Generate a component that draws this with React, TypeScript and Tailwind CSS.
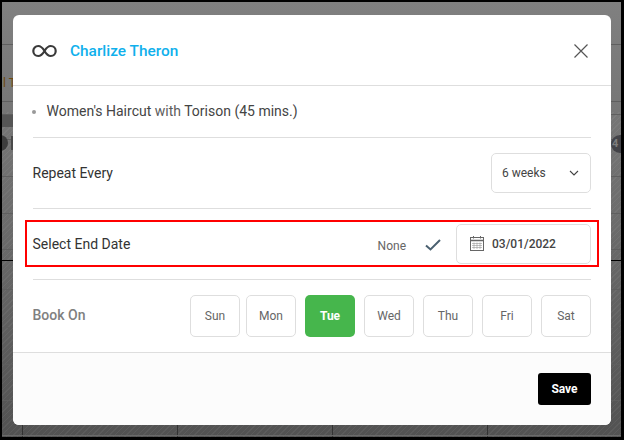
import React from "react";

const days = ["Sun", "Mon", "Tue", "Wed", "Thu", "Fri", "Sat"];

const hLines = [42, 99, 112, 137, 174, 211, 247, 287, 325, 362, 398];

const Backdrop = () => {
	return (
		<div className="absolute inset-0 overflow-hidden bg-gradient-to-b from-[#808080] via-[#6c6c6c] to-[#525252]">
			<div className="absolute inset-x-0 top-[110px] bottom-0 bg-[repeating-linear-gradient(135deg,rgba(255,255,255,0.05)_0px,rgba(255,255,255,0.05)_1px,transparent_1px,transparent_4px)]" />
			{hLines.map((y) => (
				<div key={y} className="absolute inset-x-0 h-px bg-[#5f5f5f]" style={{ top: y }} />
			))}
			<div className="absolute inset-x-0 top-[258px] h-px bg-black" />
			<div className="absolute left-0 w-[12px] top-[113px] h-[12px] bg-[#555555]" />
			<div className="absolute left-[-10px] top-[133px] w-[16px] h-[16px] rounded-full bg-[#3d3d3d]" />
			<div className="absolute left-[9px] top-[134px] w-[4px] h-[14px] bg-[#4a4a4a]" />
			<div className="absolute right-[-8px] top-[133px] w-[18px] h-[18px] rounded-full bg-[#434348] text-[11px] font-bold leading-[18px] pl-[1px] text-[#7d7d7d] font-['Roboto',sans-serif]">
				4
			</div>
			<div className="absolute left-[1px] top-[73px] text-[12px] leading-[16px] text-[#6e4a10] font-['Roboto',sans-serif]">
				l T
			</div>
			{[20, 175, 330, 485].map((x) => (
				<div key={x} className="absolute top-[410px] bottom-0 w-px bg-[#333333]" style={{ left: x }} />
			))}
			<div className="absolute inset-x-0 bottom-[1px] h-px bg-[#6a6a6a]" />
		</div>
	);
};

const App = () => {
	return (
		<div className="w-[624px] h-[440px] bg-black pt-[2px] pl-[2px] pr-[3px] pb-[3px] font-['Roboto',sans-serif]">
			<div className="relative w-full h-full pt-[13px] pl-[11px]">
				<Backdrop />
				<div className="relative w-[598px] h-[410px] bg-white rounded-[6px] flex flex-col overflow-hidden">
					{/*Header*/}
					<div className="h-[71px] shrink-0 flex items-center pt-[2px] pl-[19px] pr-[22.5px] border-b border-[#dedede]">
						<svg width="25" height="14" viewBox="0 0 25 14" fill="none" stroke="#3a3a3a" strokeWidth="2.2">
							<path d="M12.5 7C10.5 3.6 8.6 2 6.2 2C3.4 2 1.3 4.2 1.3 7C1.3 9.8 3.4 12 6.2 12C8.6 12 10.5 10.4 12.5 7C14.5 3.6 16.4 2 18.8 2C21.6 2 23.7 4.2 23.7 7C23.7 9.8 21.6 12 18.8 12C16.4 12 14.5 10.4 12.5 7Z" />
						</svg>
						<div className="ml-[13px] mt-[1px] text-[15.4px] font-medium text-[#0fb0ec]">Charlize Theron</div>
						<svg className="ml-auto" width="16" height="16" viewBox="0 0 16 16" fill="none" stroke="#555555" strokeWidth="1.2">
							<path d="M1.5 1.5L14.5 14.5M14.5 1.5L1.5 14.5" />
						</svg>
					</div>

					<div className="flex-1 px-[20px]">
						{/*Service*/}
						<div className="h-[52px] flex items-center border-b border-[#dedede]">
							<div className="w-[4px] h-[4px] ml-[-1px] mt-[1px] bg-[#999999] rounded-full" />
							<div className="ml-[10.5px] text-[14px] text-[#5c5c5c]">
								<span className="text-[#444444]">Women's Haircut</span> with{" "}
								<span className="text-[#444444]">Torison (45 mins.)</span>
							</div>
						</div>

						{/*Repeat Every*/}
						<div className="h-[71px] flex items-center justify-between border-b border-[#dedede]">
							<div className="ml-[-0.5px] text-[14px] text-[#333333]">Repeat Every</div>
							<div className="w-[100px] h-[40px] flex items-center justify-between pl-[10px] pr-[11px] border border-[#dedede] rounded-[5px] text-[12px] text-[#444444]">
								6 weeks
								<svg width="10" height="6" viewBox="0 0 10 6" fill="none" stroke="#444444" strokeWidth="1.1">
									<path d="M1 1L5 5L9 1" />
								</svg>
							</div>
						</div>

						{/*Select End Date*/}
						<div className="h-[71px] flex flex-col justify-center border-b border-[#dedede]">
							<div className="mx-[-8px] mb-[1px] h-[47px] flex items-center pl-[5.5px] pr-[6px] border-2 border-[#ff0000]">
								<div className="mt-[1px] text-[14px] text-[#333333]">Select End Date</div>
								<div className="ml-auto mt-[5px] text-[12px] text-[#666666]">None</div>
								<svg className="ml-[19px] mt-[2px]" width="16" height="12" viewBox="0 0 16 12" fill="none" stroke="#4a6070" strokeWidth="2">
									<path d="M1 6.5L5.5 10.5L15 1" />
								</svg>
								<div className="ml-[15px] w-[135px] h-[40px] flex items-center pl-[13px] border border-[#dedede] rounded-[5px] text-[12px] font-medium text-[#444444]">
									<svg width="14" height="15" viewBox="0 0 14 15" fill="none" stroke="#666666" strokeWidth="1">
										<rect x="0.5" y="1.5" width="13" height="13" />
										<path d="M0.5 4.5H13.5" strokeWidth="1.4" />
										<path d="M3.5 0V2.5M10.5 0V2.5" />
										<path d="M2 7.5H12M2 9.5H12M2 11.5H12M4 6.5V13M7 6.5V13M10 6.5V13" strokeWidth="0.6" stroke="#999999" />
									</svg>
									<span className="ml-[8px]">03/01/2022</span>
								</div>
							</div>
						</div>

						{/*Book On*/}
						<div className="h-[72px] flex items-center justify-between">
							<div className="ml-[-0.5px] mt-[-2px] text-[14px] font-medium text-[#808080]">Book On</div>
							<div className="flex gap-[9px]">
								{days.map((day) => (
									<div
										key={day}
										className={
											day === "Tue"
												? "w-[50px] h-[42px] flex items-center justify-center rounded-[5px] bg-[#46b64c] text-[12px] font-bold text-white"
												: day === "Sun"
													? "w-[50px] h-[42px] -mr-[3px] flex items-center justify-center rounded-[5px] border border-[#dedede] text-[12px] text-[#666666]"
													: "w-[50px] h-[42px] flex items-center justify-center rounded-[5px] border border-[#dedede] text-[12px] text-[#666666]"
										}
									>
										{day}
									</div>
								))}
							</div>
						</div>
					</div>

					{/*Footer*/}
					<div className="h-[73px] shrink-0 flex justify-end pt-[20px] pr-[20px] bg-[#fcfcfc] border-t border-[#dedede]">
						<button className="w-[53px] h-[32px] bg-black rounded-[3px] text-[12px] font-bold text-white">
							Save
						</button>
					</div>
				</div>
			</div>
		</div>
	);
};

export default App;
